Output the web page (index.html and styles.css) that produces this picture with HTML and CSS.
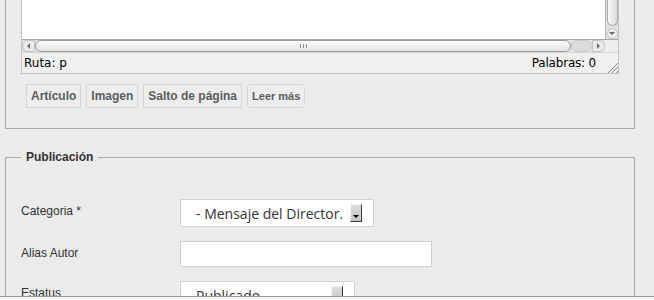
FILE: index.html
```html
<!DOCTYPE html>
<html lang="es">
<head>
    <meta charset="UTF-8">
    <meta name="viewport" content="width=device-width, initial-scale=1.0">
    <title>Nuevo artículo</title>
    <link rel="stylesheet" href="styles.css">
</head>
<body>
    <div class="viewport">
        <div class="page">
            <fieldset class="box box-editor">
                <div class="editor">
                    <div class="editor-area">
                        <div class="editor-body"></div>
                        <div class="vscroll">
                            <div class="vscroll-thumb"></div>
                            <div class="vscroll-down"><span class="arrow-down"></span></div>
                        </div>
                    </div>
                    <div class="hscroll">
                        <div class="hs-btn hs-left"><span class="arrow-left"></span></div>
                        <div class="hs-thumb"><span class="grip"></span></div>
                        <div class="hs-trough"></div>
                        <div class="hs-btn hs-right"><span class="arrow-right"></span></div>
                        <div class="scroll-corner"></div>
                    </div>
                    <div class="statusbar">
                        <span>Ruta: p</span>
                        <span class="words">Palabras: 0</span>
                        <svg class="resize" width="11" height="11" viewBox="0 0 11 11">
                            <path d="M11 1 L1 11 M11 5 L5 11 M11 9 L9 11" stroke="#8a8a8a" stroke-width="1"/>
                        </svg>
                    </div>
                </div>
                <div class="editor-buttons">
                    <button type="button" class="ed-btn">Artículo</button>
                    <button type="button" class="ed-btn">Imagen</button>
                    <button type="button" class="ed-btn">Salto de página</button>
                    <button type="button" class="ed-btn ed-btn-round">Leer más</button>
                </div>
            </fieldset>

            <fieldset class="box box-pub">
                <legend>Publicación</legend>
                <div class="row">
                    <label for="catid">Categoria *</label>
                    <span class="select-wrap">
                        <select id="catid" class="select select-cat">
                            <option>- Mensaje del Director.</option>
                        </select>
                        <span class="select-btn"></span>
                    </span>
                </div>
                <div class="row">
                    <label for="alias">Alias Autor</label>
                    <input type="text" id="alias" class="input">
                </div>
                <div class="row">
                    <label for="state">Estatus</label>
                    <span class="select-wrap">
                        <select id="state" class="select select-state">
                            <option>Publicado</option>
                        </select>
                        <span class="select-btn"></span>
                    </span>
                </div>
            </fieldset>
        </div>
    </div>
    <div class="window-bottom"></div>
</body>
</html>
```

FILE: styles.css
```css
* {
    box-sizing: border-box;
}
html, body {
    margin: 0;
    height: 100%;
}
body {
    background: #ebebeb;
    font-family: "Liberation Sans", Arial, sans-serif;
    font-size: 12px;
    color: #333;
    overflow: hidden;
    display: flex;
    flex-direction: column;
}
.viewport {
    height: 296px;
    overflow: hidden;
}
.window-bottom {
    height: 4px;
    border-top: 1px solid #9a9a9a;
    background: #f4f4f4;
}
.page {
    margin-top: -12px;
    padding: 0 19px 0 5px;
}
.box {
    margin: 0;
    min-width: 0;
    border: 1px solid #aaa;
    padding: 10px 15px 20px;
}
.box-pub {
    margin-top: 20px;
    padding: 27px 15px 20px;
}
.box legend {
    padding: 0 5px;
    font-weight: bold;
    line-height: 16px;
    color: #333;
}

/* editor */
.editor {
    border: 1px solid #c2c2c2;
}
.editor-area {
    display: flex;
    height: 39px;
}
.editor-body {
    flex: 1;
    background: #fff;
}
.vscroll {
    width: 13px;
    display: flex;
    flex-direction: column;
    align-items: center;
    background: #e4e4e4;
    border-left: 1px solid #b3b3b3;
}
.vscroll-thumb {
    flex: 1;
    width: 11px;
    background: linear-gradient(90deg, #f7f7f7, #dadada);
    border: 1px solid #a8a8a8;
    border-top: none;
    border-radius: 0 0 6px 6px;
}
.vscroll-down {
    width: 11px;
    height: 11px;
    margin: 2px 0 0;
    display: flex;
    align-items: center;
    justify-content: center;
    background: #ededed;
    border: 1px solid #c2c2c2;
    border-radius: 6px;
}
.arrow-down {
    border-top: 3px solid #6a6a6a;
    border-left: 3px solid transparent;
    border-right: 3px solid transparent;
}
.hscroll {
    display: flex;
    height: 13px;
    background: #e2e2e2;
    border-top: 1px solid #a6a6a6;
}
.hs-btn {
    width: 13px;
    display: flex;
    align-items: center;
    justify-content: center;
    background: #ececec;
    border: 1px solid #c2c2c2;
}
.hs-left {
    border-radius: 6px 0 0 6px;
}
.hs-right {
    border-radius: 0 6px 6px 0;
}
.arrow-left {
    border-right: 3px solid #6a6a6a;
    border-top: 3px solid transparent;
    border-bottom: 3px solid transparent;
}
.arrow-right {
    border-left: 3px solid #6a6a6a;
    border-top: 3px solid transparent;
    border-bottom: 3px solid transparent;
}
.hs-thumb {
    flex: 1;
    display: flex;
    align-items: center;
    justify-content: center;
    background: linear-gradient(#fbfbfb, #e3e3e3);
    border: 1px solid #9c9c9c;
    border-radius: 6px;
}
.grip {
    width: 7px;
    height: 4px;
    background: repeating-linear-gradient(90deg, #8c8c8c 0 1px, transparent 1px 3px);
}
.hs-trough {
    width: 21px;
    background: #dcdcdc;
    border: 1px solid #c8c8c8;
    border-radius: 6px;
}
.scroll-corner {
    width: 13px;
    background: #ededed;
}
.statusbar {
    height: 21px;
    display: flex;
    align-items: center;
    padding-left: 2px;
    background: #f0f0f0;
    border-top: 1px solid #d4d4d4;
    font-family: "DejaVu Sans", Verdana, sans-serif;
    font-size: 12px;
    color: #000;
}
.words {
    margin-left: auto;
    letter-spacing: -0.2px;
}
.resize {
    align-self: flex-end;
    margin-left: 11px;
}
.editor-buttons {
    display: flex;
    gap: 5px;
    margin-top: 10px;
    padding-left: 5px;
}
.ed-btn {
    height: 24px;
    padding: 0 4px;
    margin: 0;
    background: #ededed;
    border: 1px solid #d6d6d6;
    border-radius: 0;
    font-family: "Liberation Sans", Arial, sans-serif;
    font-size: 12px;
    font-weight: bold;
    color: #5c5c5c;
}
.ed-btn-round {
    border-radius: 4px;
    font-size: 11px;
}

/* form rows */
.row {
    display: flex;
    align-items: flex-start;
    padding: 7px 0;
}
.row label {
    width: 159px;
    line-height: 24px;
    color: #333;
}
.select-wrap {
    position: relative;
    display: inline-block;
}
.select {
    -webkit-appearance: none;
    appearance: none;
    display: block;
    height: 28px;
    margin: 0;
    padding: 0 0 0 15px;
    background: #fff;
    border: 1px solid #d2d2d2;
    border-radius: 0;
    font-family: "Open Sans", sans-serif;
    font-size: 14px;
    color: #333;
}
.select-cat {
    width: 194px;
}
.select-state {
    width: 175px;
}
.select-btn {
    position: absolute;
    top: 5px;
    right: 12px;
    width: 12px;
    height: 18px;
    display: flex;
    align-items: center;
    justify-content: center;
    padding-top: 6px;
    background: linear-gradient(#dcdcdc, #c4c4c4);
    border: 1px solid;
    border-color: #f4f4f4 #3a3a3a #3a3a3a #f4f4f4;
}
.select-btn::after {
    content: "";
    border-top: 3px solid #000;
    border-left: 3px solid transparent;
    border-right: 3px solid transparent;
}
.input {
    width: 252px;
    height: 26px;
    margin: 0;
    background: #fff;
    border: 1px solid #cfcfcf;
    border-radius: 0;
}
```
